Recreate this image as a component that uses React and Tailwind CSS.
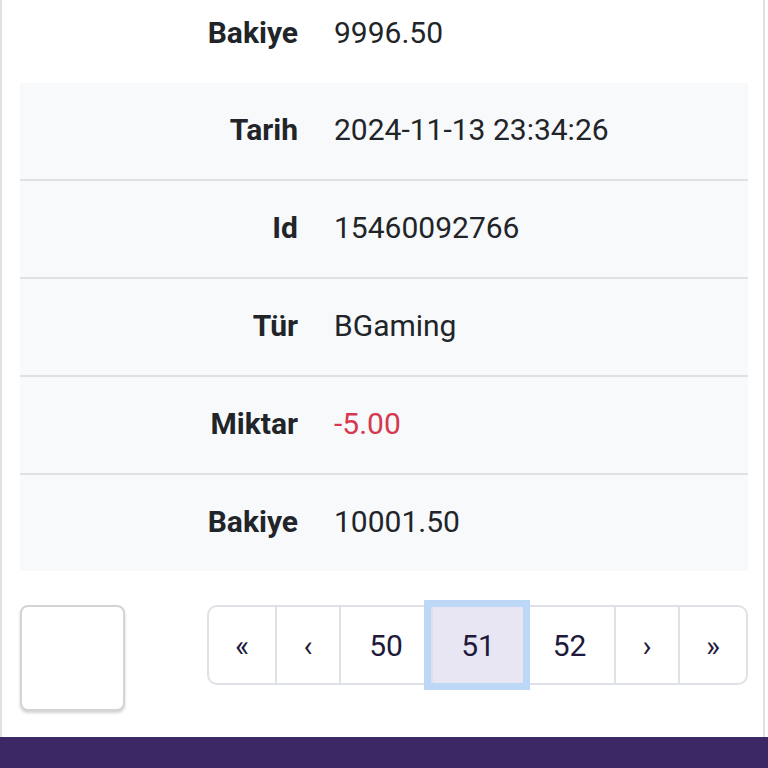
const rows = [
  { label: "Tarih", value: "2024-11-13 23:34:26" },
  { label: "Id", value: "15460092766" },
  { label: "Tür", value: "BGaming" },
  { label: "Miktar", value: "-5.00", negative: true },
  { label: "Bakiye", value: "10001.50" },
];

const pages = [
  { label: "«", w: "w-[66px]" },
  { label: "‹", w: "w-[64px]" },
  { label: "50", w: "w-[92px]" },
  { label: "51", w: "w-[92px]", active: true },
  { label: "52", w: "w-[91px]" },
  { label: "›", w: "w-[64px]" },
  { label: "»", w: "w-[68px]" },
];

const Row = ({ label, value, negative, last }) => (
  <div
    className={`flex items-center pb-[4px] ${last ? "h-[96px]" : "h-[98px] border-b-2 border-[#dee2e6]"}`}
  >
    <div className="w-[278px] text-right font-bold text-[#212529]">{label}</div>
    <div className={`pl-[36px] ${negative ? "text-[#d6394f]" : "text-[#212529]"}`}>
      {value}
    </div>
  </div>
);

const App = () => {
  return (
    <div
      className="w-[768px] h-[768px] overflow-hidden bg-white flex flex-col text-[30px]"
      style={{ fontFamily: "Roboto, 'Liberation Sans', sans-serif" }}
    >
      <div className="flex-1 flex">
        <div className="flex-1 mr-[3px] border-l-2 border-r-2 border-[#e0e0e0] pl-[18px] pr-[15px] flex flex-col">
          <div className="flex items-center h-[98px] mt-[-15px] pb-[4px]">
            <div className="w-[278px] text-right font-bold text-[#212529]">Bakiye</div>
            <div className="pl-[36px] text-[#212529]">9996.50</div>
          </div>

          <div className="bg-[#f8f9fb]">
            {rows.map((r, i) => (
              <Row key={r.label + i} {...r} last={i === rows.length - 1} />
            ))}
          </div>

          <div className="flex justify-between items-start mt-[34px]">
            <div className="w-[105px] h-[106px] rounded-[8px] border-2 border-[#d4d4d4] bg-white shadow-[0_2px_3px_rgba(0,0,0,0.18)]" />

            <div className="flex h-[80px] border-2 border-[#dee2e6] rounded-[10px] bg-white">
              {pages.map((p, i) => (
                <div
                  key={p.label}
                  className={`${p.w} flex items-center justify-center text-[#1d1a3b] text-[30px] ${
                    i > 0 ? "border-l-2 border-[#dee2e6]" : ""
                  } ${
                    p.active
                      ? "relative z-10 bg-[#e9e6f3] border-l-0 shadow-[0_0_0_7px_#bcd8f6]"
                      : ""
                  }`}
                >
                  {p.label}
                </div>
              ))}
            </div>
          </div>
        </div>
      </div>
      <div className="h-[31px] bg-[#3c2865]" />
    </div>
  );
};

export default App;
